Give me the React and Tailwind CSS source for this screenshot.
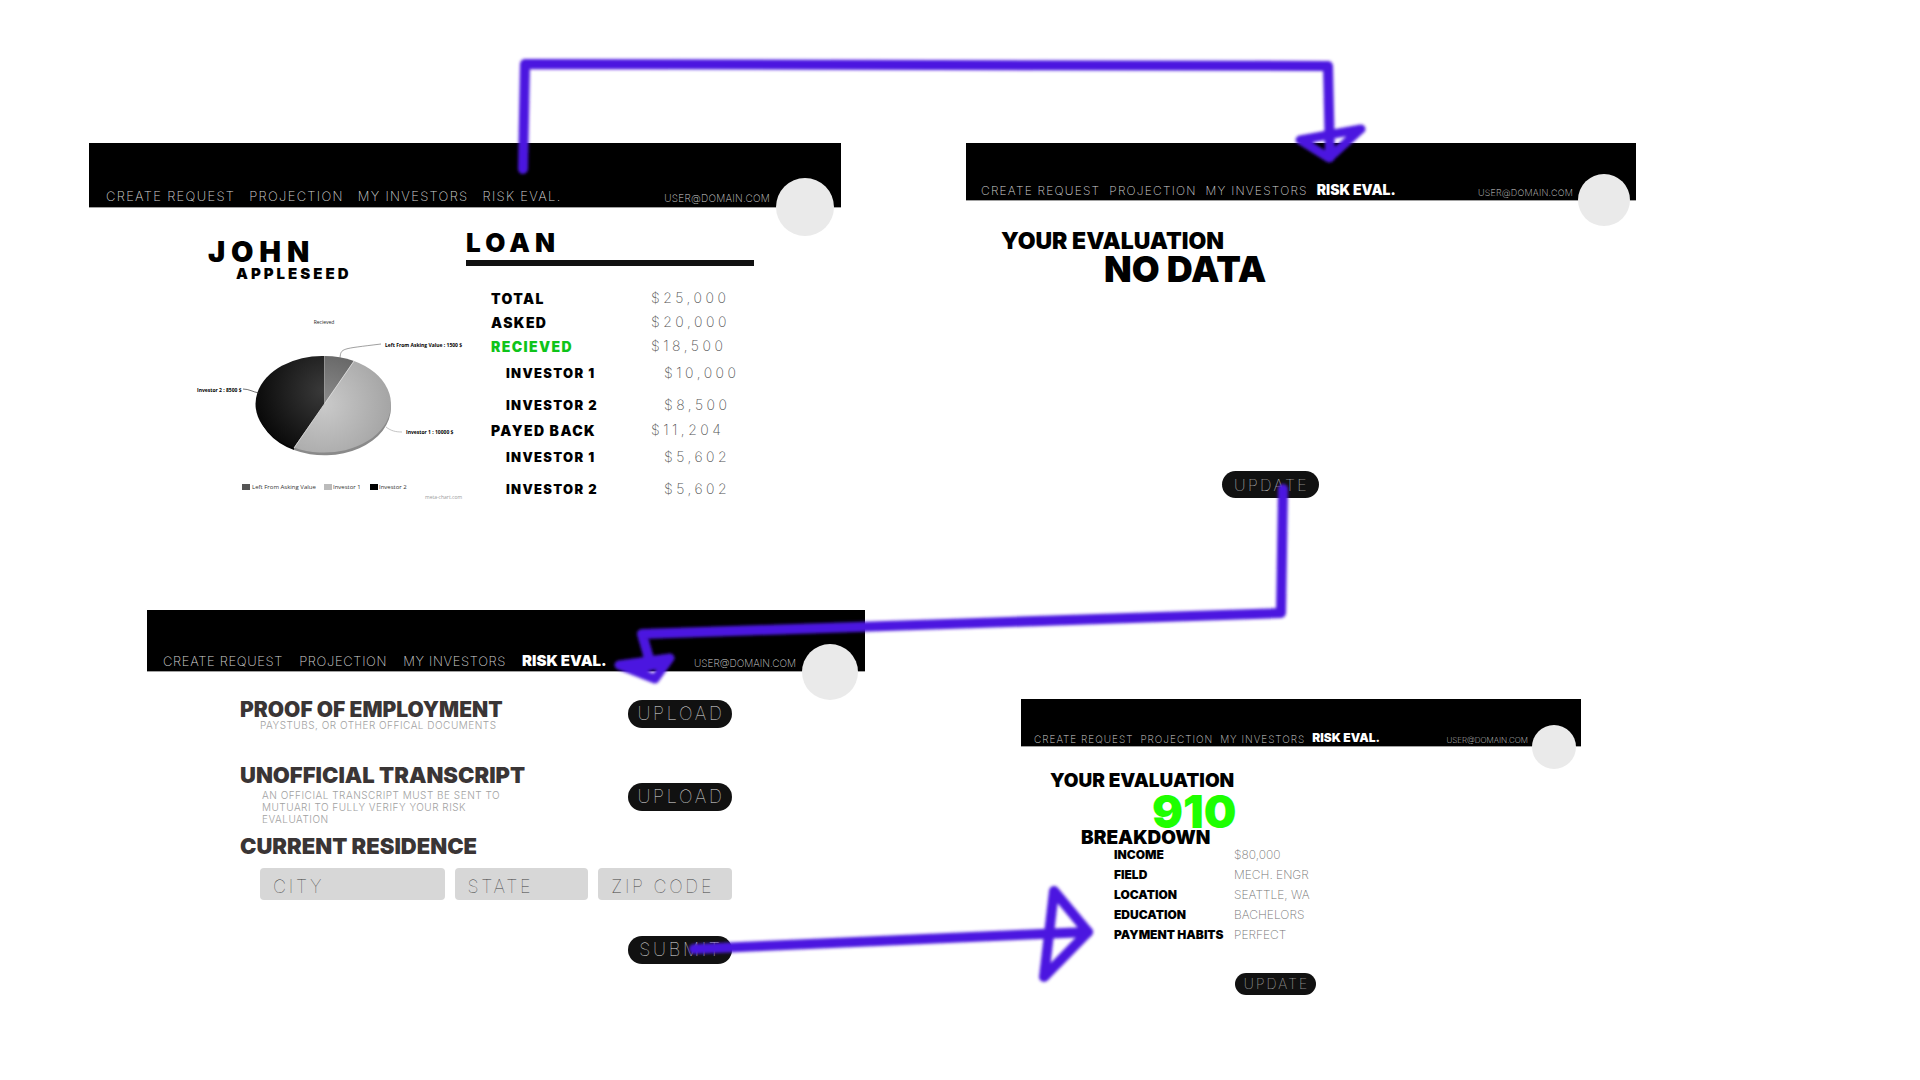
import React from "react";

const LINKS = ["CREATE REQUEST", "PROJECTION", "MY INVESTORS"];

function Header({ bar, nav, risk, email, avatar, active }) {
  return (
    <header className={`relative flex items-end justify-between border-b border-neutral-400 bg-black leading-none ${bar}`}>
      <nav className={`flex whitespace-nowrap font-extralight text-neutral-300 ${nav}`}>
        {LINKS.map((label) => (
          <a key={label} href="#">{label}</a>
        ))}
        <a href="#" className={active ? `font-black tracking-normal text-white ${risk}` : ""}>RISK EVAL.</a>
      </nav>
      <a href="#" className={`font-extralight text-neutral-300 ${email}`}>USER@DOMAIN.COM</a>
      <div className={`absolute rounded-full bg-[#eaeaea] ${avatar}`} />
    </header>
  );
}

function Pill({ children, className, type = "button" }) {
  return (
    <button type={type} className={`flex shrink-0 items-center justify-center rounded-full bg-[#111] pl-0.5 font-thin leading-none tracking-[0.15em] text-neutral-200 ${className}`}>
      {children}
    </button>
  );
}

function PieChart() {
  return (
    <svg viewBox="0 0 286 210" className="ml-[91px] mt-[19px] block h-[210px] w-[286px]" role="img" aria-label="Recieved">
      <defs>
        <radialGradient id="mid" gradientUnits="userSpaceOnUse" cx="144" cy="104" r="68">
          <stop offset="0" stopColor="#8c8c8c" />
          <stop offset="1" stopColor="#5c5c5c" />
        </radialGradient>
        <radialGradient id="light" gradientUnits="userSpaceOnUse" cx="144" cy="104" r="68">
          <stop offset="0" stopColor="#cacaca" />
          <stop offset="1" stopColor="#a4a4a4" />
        </radialGradient>
        <radialGradient id="dark" gradientUnits="userSpaceOnUse" cx="144" cy="90" r="72">
          <stop offset="0" stopColor="#3a3a3a" />
          <stop offset="1" stopColor="#080808" />
        </radialGradient>
      </defs>
      <path d="M78 104 V107 A66.5 48 0 0 0 114 150 L114 146 Z" fill="#050505" />
      <path d="M114 146 V150 A66.5 48 0 0 0 211 107 V104 Z" fill="#8a8a8a" />
      <path d="M144.500 104 V56 A66.500 48 0 0 1 174 61 Z" fill="url(#mid)" />
      <path d="M144.500 104 L174 61 A66.500 48 0 0 1 114 147.500 Z" fill="url(#light)" />
      <path d="M144.500 104 L114 147.500 A66.500 48 0 0 1 144.500 56 Z" fill="url(#dark)" />
      <path d="M144.500 56 V104" stroke="#aaa" strokeWidth="0.600" />
      <path d="M114 148 L174 61" stroke="#ddd" strokeWidth="0.800" />
      <g fill="none" strokeWidth="0.700">
        <path d="M160 58 C161 48 161 49 201 44" stroke="#777" />
        <path d="M63 89 C69 89 73 92 79 93" stroke="#333" />
        <path d="M206 127 C211 131 216 132 222 132" stroke="#aaa" />
      </g>
      <g fontFamily="Open Sans, sans-serif" fontSize="5" fontWeight="700" fill="#000">
        <text x="205" y="47">Left From Asking Value : 1500 $</text>
        <text x="17" y="92">Investor 2 : 8500 $</text>
        <text x="226" y="134">Investor 1 : 10000 $</text>
      </g>
      <text x="144" y="24" textAnchor="middle" fontFamily="Open Sans, sans-serif" fontSize="5" fill="#222">Recieved</text>
      <rect x="62" y="184" width="8" height="6" fill="#555" />
      <rect x="144" y="184" width="8" height="6" fill="#bbb" />
      <rect x="190" y="184" width="8" height="6" fill="#000" />
      <g fontFamily="Open Sans, sans-serif" fontSize="6" fill="#333">
        <text x="72" y="189">Left From Asking Value</text>
        <text x="153" y="189">Investor 1</text>
        <text x="199" y="189">Investor 2</text>
      </g>
      <text x="245" y="199" fontFamily="Open Sans, sans-serif" fontSize="5" fill="#999">meta-chart.com</text>
    </svg>
  );
}

const LOAN = [
  { label: "TOTAL", value: "$25,000", h: "h-6" },
  { label: "ASKED", value: "$20,000", h: "h-6" },
  { label: "RECIEVED", value: "$18,500", h: "h-6", green: true },
  { label: "INVESTOR 1", value: "$10,000", h: "h-7", sub: true },
  { label: "INVESTOR 2", value: "$8,500", h: "h-9", sub: true },
  { label: "PAYED BACK", value: "$11,204", h: "h-4" },
  { label: "INVESTOR 1", value: "$5,602", h: "h-9", sub: true },
  { label: "INVESTOR 2", value: "$5,602", h: "h-7", sub: true },
];

function LoanScreen() {
  return (
    <section className="col-start-2">
      <Header
        bar="h-[65px] pb-1 pl-[17px] pr-[71px]"
        nav="gap-3.5 text-[13px] tracking-widest"
        email="text-[10px] tracking-wide"
        avatar="right-[7px] top-[35px] size-[58px]"
      />
      <div className="grid grid-cols-[377fr_375fr]">
        <div className="pt-[29px]">
          <h1 className="pl-[119px] font-black">
            <span className="block text-[29px] leading-[30px] tracking-[0.2em]">JOHN</span>
            <span className="block pl-7 text-[15px] leading-[14px] tracking-[0.2em]">APPLESEED</span>
          </h1>
          <PieChart />
        </div>
        <div className="pr-[87px] pt-[22px]">
          <h2 className="border-b-[6px] border-[#111] pb-1 text-[26px] font-black leading-none tracking-[0.2em]">LOAN</h2>
          <table className="ml-[25px] mt-[21px] w-[263px] text-[14px] leading-none">
            <tbody>
              {LOAN.map((r, i) => (
                <tr key={i} className={r.h}>
                  <th scope="row" className={`whitespace-nowrap p-0 text-left font-black tracking-widest ${r.green ? "text-[#0fc41a]" : ""} ${r.sub ? "pl-[15px] text-[13px]" : ""}`}>{r.label}</th>
                  <td className={`w-[103px] p-0 font-extralight tracking-[0.25em] text-neutral-600 ${r.sub ? "pl-[13px]" : "pb-0.5"}`}>{r.value}</td>
                </tr>
              ))}
            </tbody>
          </table>
        </div>
      </div>
    </section>
  );
}

function NoDataScreen() {
  return (
    <section className="col-start-4">
      <Header
        active
        bar="h-[58px] pb-[3px] pl-[15px] pr-[63px]"
        nav="items-end gap-[9px] text-[12px] tracking-widest"
        risk="text-[14px]"
        email="text-[9px] tracking-wide"
        avatar="right-1.5 top-[31px] size-[52px]"
      />
      <h2 className="pl-[35px] pt-[29px] font-black">
        <span className="block text-[23px] leading-[22px]">YOUR EVALUATION</span>
        <span className="block pl-[103px] text-[36px] leading-[34px]">NO DATA</span>
      </h2>
      <Pill className="ml-64 mt-[185px] h-[27px] w-[97px] text-[16px]">UPDATE</Pill>
    </section>
  );
}

function Field({ label }) {
  return (
    <input
      type="text"
      aria-label={label}
      placeholder={label}
      className="h-8 min-w-0 rounded-sm bg-[#d7d7d7] pl-[13px] pt-1 text-[18px] font-thin leading-none tracking-[0.15em] text-neutral-700 outline-none placeholder:text-neutral-700"
    />
  );
}

function UploadScreen() {
  return (
    <section className="col-start-2">
      <Header
        active
        bar="h-[62px] pb-[3px] pl-4 pr-[69px]"
        nav="items-end gap-4 text-[13px] tracking-wider"
        risk="text-[15px]"
        email="text-[10px]"
        avatar="right-[7px] top-[34px] size-[56px]"
      />
      <form className="pl-[93px] pr-[133px] pt-7 text-[#3a3535]" onSubmit={(e) => e.preventDefault()}>
        <div className="flex h-[65px] items-start justify-between">
          <div>
            <h3 className="text-[21px] font-black leading-5">PROOF OF EMPLOYMENT</h3>
            <p className="pl-5 text-[10px] font-light leading-[10px] tracking-wider text-neutral-400">PAYSTUBS, OR OTHER OFFICAL DOCUMENTS</p>
          </div>
          <Pill className="h-7 w-[104px] text-[18px]">UPLOAD</Pill>
        </div>
        <div className="flex h-[71px] items-start justify-between">
          <div>
            <h3 className="text-[22px] font-black leading-5">UNOFFICIAL TRANSCRIPT</h3>
            <p className="mt-1 pl-[22px] text-[10px] font-light leading-3 tracking-wider text-neutral-400">
              AN OFFICIAL TRANSCRIPT MUST BE SENT TO<br />
              MUTUARI TO FULLY VERIFY YOUR RISK<br />
              EVALUATION
            </p>
          </div>
          <Pill className="mt-[18px] h-7 w-[104px] text-[18px]">UPLOAD</Pill>
        </div>
        <h3 className="text-[22px] font-black leading-5">CURRENT RESIDENCE</h3>
        <div className="ml-5 mt-3 grid grid-cols-[185fr_134fr_134fr] gap-2.5">
          <Field label="CITY" />
          <Field label="STATE" />
          <Field label="ZIP CODE" />
        </div>
        <div className="mt-9 flex justify-end">
          <Pill type="submit" className="h-7 w-[104px] text-[18px]">SUBMIT</Pill>
        </div>
      </form>
    </section>
  );
}

const BREAKDOWN = [
  ["INCOME", "$80,000"],
  ["FIELD", "MECH. ENGR"],
  ["LOCATION", "SEATTLE, WA"],
  ["EDUCATION", "BACHELORS"],
  ["PAYMENT HABITS", "PERFECT"],
];

function ResultScreen() {
  return (
    <section className="col-start-4 mt-[89px]">
      <Header
        active
        bar="h-12 pb-0.5 pl-[13px] pr-[53px]"
        nav="items-end gap-[7px] text-[10px] tracking-widest"
        risk="text-[12px]"
        email="text-[8px]"
        avatar="right-[5px] top-[26px] size-11"
      />
      <h2 className="pl-[29px] pt-6 text-[19px] font-black leading-5">YOUR EVALUATION</h2>
      <p className="pl-[131px] text-[46px] font-black leading-10 text-[#1eff00]">910</p>
      <h3 className="pl-[60px] text-[19px] font-black leading-[14px]">BREAKDOWN</h3>
      <table className="ml-[93px] text-[12px] leading-none">
        <tbody>
          {BREAKDOWN.map(([k, v]) => (
            <tr key={k} className="h-5">
              <th scope="row" className="w-[120px] whitespace-nowrap p-0 text-left font-black">{k}</th>
              <td className="whitespace-nowrap p-0 font-extralight text-neutral-500">{v}</td>
            </tr>
          ))}
        </tbody>
      </table>
      <Pill className="ml-[214px] mt-7 h-[22px] w-[81px] text-[14px]">UPDATE</Pill>
    </section>
  );
}

function Arrows() {
  return (
    <svg viewBox="0 0 1920 1080" preserveAspectRatio="none" className="pointer-events-none absolute left-0 top-0 h-[1080px] w-full" aria-hidden="true">
      <defs>
        <filter id="soft" filterUnits="userSpaceOnUse" x="0" y="0" width="1920" height="1080">
          <feGaussianBlur stdDeviation="1.500" />
        </filter>
      </defs>
      <g fill="none" stroke="#4b14e0" strokeWidth="10" strokeLinecap="round" strokeLinejoin="round" filter="url(#soft)">
        <path d="M523 169 L525 64 L1328 66 L1330 157" />
        <path strokeWidth="9" d="M1300 140 L1361 129 L1329 158 Z" />
        <path d="M1283 489 L1281 613 L642 634 L650 662" />
        <path strokeWidth="9" d="M619 665 L670 658 L655 679 Z M640 668 L660 664" />
        <path d="M694 949 L1088 932" />
        <path d="M1054 891 L1088 932 L1044 977 Z" />
      </g>
    </svg>
  );
}

export default function App() {
  return (
    <main className="relative min-h-screen overflow-hidden bg-white pt-[143px] font-['Inter',sans-serif] text-black">
      <div className="grid min-h-[467px] grid-cols-[89fr_752fr_125fr_670fr_284fr] items-start">
        <LoanScreen />
        <NoDataScreen />
      </div>
      <div className="grid grid-cols-[147fr_718fr_156fr_560fr_339fr] items-start">
        <UploadScreen />
        <ResultScreen />
      </div>
      <Arrows />
    </main>
  );
}
